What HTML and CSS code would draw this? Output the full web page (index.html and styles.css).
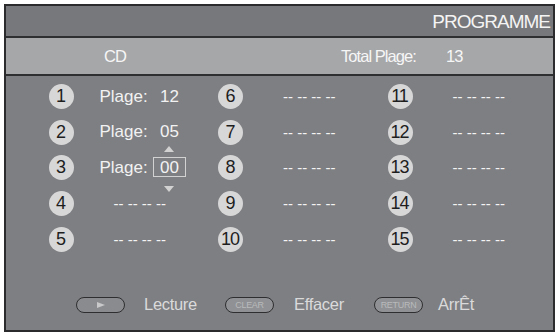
FILE: index.html
```html
<!DOCTYPE html>
<html>
<head>
<meta charset="utf-8">
<link rel="stylesheet" href="styles.css">
</head>
<body>
<div class="frame">
  <div class="title-bar">PROGRAMME</div>
  <div class="info-bar">
    <span class="disc">CD</span>
    <span class="total">Total Plage:</span>
    <span class="total-num">13</span>
  </div>
  <div class="body">
    <div class="grid">
      <div class="slot"><span class="num">1</span><span class="lbl">Plage:</span><span class="val">12</span></div>
      <div class="slot"><span class="num">6</span><span class="dash">-- -- -- --</span></div>
      <div class="slot"><span class="num">11</span><span class="dash">-- -- -- --</span></div>

      <div class="slot"><span class="num">2</span><span class="lbl">Plage:</span><span class="val">05</span></div>
      <div class="slot"><span class="num">7</span><span class="dash">-- -- -- --</span></div>
      <div class="slot"><span class="num">12</span><span class="dash">-- -- -- --</span></div>

      <div class="slot"><span class="num">3</span><span class="lbl">Plage:</span><span class="val sel">00</span></div>
      <div class="slot"><span class="num">8</span><span class="dash">-- -- -- --</span></div>
      <div class="slot"><span class="num">13</span><span class="dash">-- -- -- --</span></div>

      <div class="slot"><span class="num">4</span><span class="dash">-- -- -- --</span></div>
      <div class="slot"><span class="num">9</span><span class="dash">-- -- -- --</span></div>
      <div class="slot"><span class="num">14</span><span class="dash">-- -- -- --</span></div>

      <div class="slot"><span class="num">5</span><span class="dash">-- -- -- --</span></div>
      <div class="slot"><span class="num">10</span><span class="dash">-- -- -- --</span></div>
      <div class="slot"><span class="num">15</span><span class="dash">-- -- -- --</span></div>
    </div>
    <div class="legend">
      <span class="pill pill-play"><span class="play"></span></span>
      <span class="leg-lbl lbl-play">Lecture</span>
      <span class="pill pill-clear">CLEAR</span>
      <span class="leg-lbl lbl-clear">Effacer</span>
      <span class="pill pill-return">RETURN</span>
      <span class="leg-lbl lbl-stop">ArrÊt</span>
    </div>
  </div>
</div>
</body>
</html>
```
FILE: styles.css
```css
html, body {
  margin: 0;
  padding: 0;
  background: #ffffff;
}
body {
  font-family: "Liberation Sans", Arial, sans-serif;
  width: 557px;
  height: 334px;
  overflow: hidden;
}
.frame {
  margin: 4px 0 0 4px;
  width: 547px;
  height: 324px;
  border: 2px solid #2b2b2d;
  background: #7e7f82;
  display: flex;
  flex-direction: column;
}
.title-bar {
  height: 30px;
  background: #77787b;
  color: #f4f4f4;
  font-size: 19px;
  letter-spacing: -1px;
  line-height: 31px;
  text-align: right;
  padding-right: 3px;
  border-bottom: 2px solid #2e2f31;
}
.info-bar {
  height: 36px;
  background: #a6a7a9;
  color: #f6f6f6;
  font-size: 16.5px;
  letter-spacing: -0.95px;
  display: flex;
  align-items: center;
  border-bottom: 2px solid #2e2f31;
}
.disc {
  margin-left: 98px;
  width: 237px;
}
.total {
  width: 105px;
}
.body {
  flex: 1;
  display: flex;
  flex-direction: column;
}
.grid {
  display: grid;
  grid-template-columns: 169.5px 169.5px 169.5px;
  grid-auto-rows: 35.6px;
  padding: 3px 0 0 42.5px;
}
.slot {
  display: flex;
  align-items: center;
  color: #f2f2f2;
  font-size: 17px;
}
.num {
  width: 25px;
  height: 25px;
  border-radius: 50%;
  background: #d7d7d8;
  color: #1e1e1e;
  font-size: 18px;
  line-height: 25px;
  text-align: center;
  letter-spacing: -1px;
  text-indent: -1px;
  flex: none;
}
.lbl {
  margin-left: 26px;
  width: 53.5px;
}
.val {
  position: relative;
  display: inline-block;
  border: 1.5px solid transparent;
  padding: 0 6px;
  line-height: 18px;
}
.val.sel {
  border-color: #d2d2d2;
  line-height: 16px;
  padding-top: 2px;
  top: -1px;
}
.val.sel::before,
.val.sel::after {
  content: "";
  position: absolute;
  left: 50%;
  margin-left: -5px;
  width: 0;
  height: 0;
  border-left: 5px solid transparent;
  border-right: 5px solid transparent;
}
.val.sel::before {
  top: -11.5px;
  border-bottom: 6px solid #d2d2d2;
}
.val.sel::after {
  bottom: -16px;
  border-top: 6px solid #d2d2d2;
}
.dash {
  margin-left: 40px;
  font-size: 15px;
  color: #f4f4f4;
}
.legend {
  display: flex;
  align-items: center;
  height: 18px;
  margin-top: 39px;
  padding-left: 70px;
}
.pill {
  box-sizing: border-box;
  width: 49px;
  height: 16px;
  border: 1.5px solid #2e2e30;
  border-radius: 8px;
  background: #8a8b8e;
  display: flex;
  align-items: center;
  justify-content: center;
  font-size: 9px;
  letter-spacing: -0.3px;
  color: #b9babc;
  flex: none;
}
.pill-clear, .pill-return {
  background: #909194;
}
.play {
  width: 0;
  height: 0;
  border-top: 3.5px solid transparent;
  border-bottom: 3.5px solid transparent;
  border-left: 8px solid #c9c9cb;
}
.leg-lbl {
  color: #dadadb;
  font-size: 16.5px;
  letter-spacing: -0.3px;
  flex: none;
}
.lbl-play {
  margin-left: 19px;
  width: 81px;
}
.lbl-clear {
  margin-left: 20px;
  width: 80px;
}
.lbl-stop {
  margin-left: 15px;
}
```
